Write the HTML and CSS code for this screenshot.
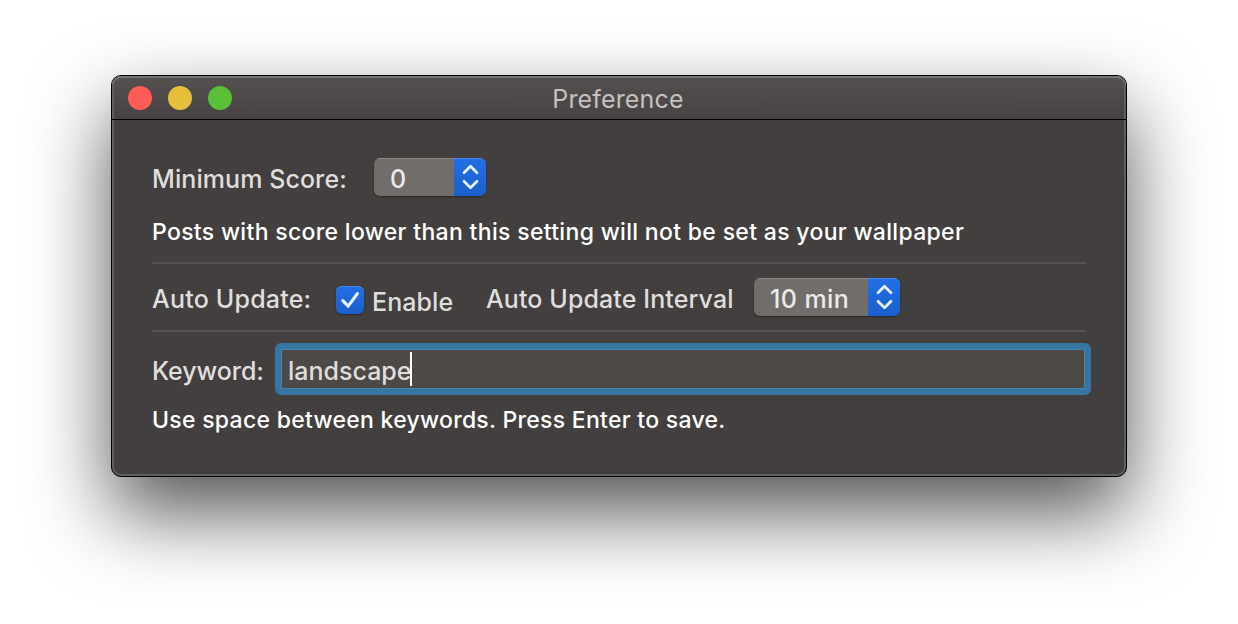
FILE: index.html
```html
<!DOCTYPE html>
<html lang="en">
<head>
<meta charset="utf-8">
<title>Preference</title>
<link rel="stylesheet" href="styles.css">
</head>
<body>
<main class="window">
  <header class="titlebar">
    <div class="lights"><i class="light red"></i><i class="light yellow"></i><i class="light green"></i></div>
    <h1 class="title">Preference</h1>
  </header>
  <section class="content">
    <div class="row score">
      <span class="label min-label">Minimum Score:</span>
      <div class="select select-score"><span class="value">0</span><span class="arrows"><svg width="32" height="38" viewBox="0 0 32 38"><path d="M10 14.8l6.5-6.5 6.5 6.5M10 23.2l6.5 6.5 6.5-6.5"/></svg></span></div>
    </div>
    <p class="hint hint-score">Posts with score lower than this setting will not be set as your wallpaper</p>
    <div class="divider"></div>
    <div class="row update">
      <span class="label auto-label">Auto Update:</span>
      <span class="checkbox"><svg width="28" height="28" viewBox="0 0 28 28"><path class="check" d="M6.8 14.6l5.4 5.6 9.2-12.6"/></svg></span>
      <span class="label enable-label">Enable</span>
      <span class="label interval-label">Auto Update Interval</span>
      <div class="select select-interval"><span class="value">10 min</span><span class="arrows"><svg width="32" height="38" viewBox="0 0 32 38"><path d="M10 14.8l6.5-6.5 6.5 6.5M10 23.2l6.5 6.5 6.5-6.5"/></svg></span></div>
    </div>
    <div class="divider"></div>
    <div class="row keyword">
      <span class="label keyword-label">Keyword:</span>
      <div class="field"><span class="field-text">landscape</span><i class="caret"></i></div>
    </div>
    <p class="hint hint-keyword">Use space between keywords. Press Enter to save.</p>
  </section>
</main>
</body>
</html>
```
FILE: styles.css
```css
* { box-sizing: border-box; }
body {
  margin: 0;
  height: 624px;
  padding: 75px 111px;
  background: #fff;
  font-family: Inter, "Liberation Sans", sans-serif;
  overflow: hidden;
}
.window {
  width: 1016px;
  height: 402px;
  border: 1px solid #000;
  border-radius: 10px;
  background: #433f3e;
  box-shadow: inset 0 0 0 2px #615e5d, 0 36px 80px rgba(0, 0, 0, .67);
}
.titlebar {
  display: grid;
  grid-template-columns: 120px 1fr 120px;
  align-items: center;
  height: 44px;
  padding: 0 0 0 16px;
  border-bottom: 1px solid #000;
  border-radius: 9px 9px 0 0;
  background: linear-gradient(#555150, #464241);
  box-shadow: inset 0 2px 0 #777473, inset 2px 0 0 #615e5d, inset -2px 0 0 #615e5d;
}
.lights { display: flex; gap: 16px; }
.light { width: 24px; height: 24px; border-radius: 50%; }
.red { background: #ff5c57; }
.yellow { background: #e5bf3c; }
.green { background: #59c037; }
.title {
  margin: 2px 0 0;
  padding-right: 18px;
  text-align: center;
  color: #c5c1bf;
  font-size: 25px;
  font-weight: 400;
  letter-spacing: .15px;
  line-height: 30px;
}
.content { padding: 38px 40px 0; }
.row { display: flex; align-items: center; }
.label, .value, .field-text {
  color: #dfdedd;
  font-size: 25px;
  font-weight: 500;
  line-height: 30px;
  letter-spacing: .08px;
  white-space: nowrap;
}
.label { flex: none; padding-top: 4px; }
.min-label { width: 222px; }
.auto-label { width: 184px; letter-spacing: .2px; }
.enable-label { width: 122px; padding: 10px 0 0 8px; }
.interval-label { width: 268px; letter-spacing: .1px; }
.keyword-label { width: 123px; letter-spacing: -.08px; }
.score { height: 38px; }
.select {
  display: flex;
  height: 38px;
  overflow: hidden;
  border-radius: 6px;
  background: #716d6b;
  box-shadow: 0 1px 2px rgba(0, 0, 0, .4);
}
.select .value {
  flex: 1;
  padding: 6px 0 0 16px;
  color: #ebeae9;
  letter-spacing: .4px;
  box-shadow: inset 0 1px 0 #8b8886;
}
.select-score { width: 112px; }
.select-interval { width: 146px; }
.arrows {
  width: 32px;
  background: linear-gradient(#216fe6, #1b5fcb);
  box-shadow: inset 0 1px 0 #4c8cec;
}
svg { display: block; }
path {
  fill: none;
  stroke: #e9f0fc;
  stroke-width: 2.7;
  stroke-linecap: round;
  stroke-linejoin: round;
}
.check { stroke-width: 3.1; }
.hint {
  margin: 0;
  color: #fff;
  font-size: 23px;
  font-weight: 500;
  letter-spacing: .32px;
  line-height: 30px;
  white-space: nowrap;
}
.hint-score { padding: 21px 0 15px; }
.divider { height: 2px; background: #565251; }
.update { height: 66px; }
.checkbox {
  flex: none;
  width: 28px;
  height: 28px;
  margin-top: 6px;
  border-radius: 6px;
  background: linear-gradient(#216fe6, #1b5fcb);
  box-shadow: inset 0 1px 0 #4c8cec, 0 1px 2px rgba(0, 0, 0, .4);
}
.keyword { height: 74px; margin-right: -5px; }
.field {
  display: flex;
  align-items: center;
  width: 816px;
  height: 52px;
  padding-left: 7px;
  border: 6px solid #3776a1;
  border-radius: 6px;
  background: #4d4947;
  box-shadow: inset 0 0 0 1px #4584ae;
}
.field-text { padding-top: 3px; letter-spacing: 0; }
.caret { width: 2px; height: 34px; margin-left: -1.5px; background: #fff; }
.hint-keyword { margin-top: -1px; letter-spacing: .28px; }
```
